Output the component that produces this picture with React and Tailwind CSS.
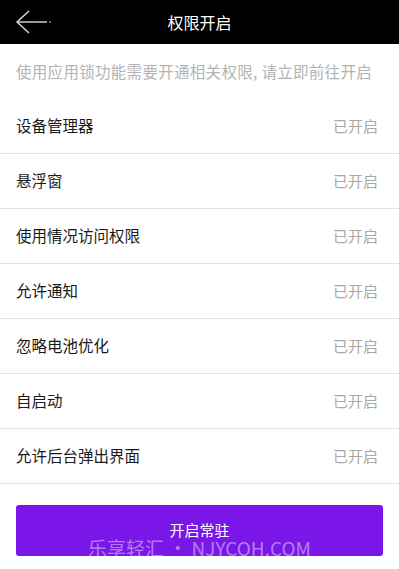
const items = [
  "设备管理器",
  "悬浮窗",
  "使用情况访问权限",
  "允许通知",
  "忽略电池优化",
  "自启动",
  "允许后台弹出界面",
];

export default function App() {
  return (
    <div
      className="w-[399px] h-[569px] bg-white overflow-hidden flex flex-col"
      style={{ fontFamily: '"Noto Sans CJK SC", "Liberation Sans", sans-serif' }}
    >
      <header className="h-[44px] bg-black flex items-center relative shrink-0">
        <svg className="absolute left-[15px] top-[9px]" width="38" height="26" viewBox="0 0 38 26" fill="none">
          <path d="M14 2 L2 13 L14 24" stroke="#ddd" strokeWidth="1.4" />
          <path d="M2 13 H32" stroke="#ddd" strokeWidth="1.4" />
          <circle cx="35" cy="13" r="0.8" fill="#ccc" />
        </svg>
        <h1 className="w-full text-center text-white text-[16px]">权限开启</h1>
      </header>
      <p className="h-[55px] flex items-center px-[16px] text-[15.5px] text-[#b3b3b3] tracking-[0.3px] whitespace-nowrap">
        使用应用锁功能需要开通相关权限, 请立即前往开启
      </p>
      <ul>
        {items.map((t) => (
          <li
            key={t}
            className="h-[55px] flex items-center justify-between pl-[16px] pr-[21px] border-b border-[#e4e4e4]"
          >
            <span className="text-[15.5px] text-[#1a1a1a]">{t}</span>
            <span className="text-[15px] text-[#a8a8a8]">已开启</span>
          </li>
        ))}
      </ul>
      <div className="px-[16px] pt-[21px] relative">
        <button className="w-full h-[51px] rounded-[3px] bg-[#7a16e8] text-white text-[15px] flex items-start justify-center pt-[14px]">
          开启常驻
        </button>
        <div className="absolute left-[88px] top-[50px] text-[19px] text-white/45 whitespace-nowrap">
          乐享轻汇 • NJYCQH.COM
        </div>
      </div>
    </div>
  );
}
